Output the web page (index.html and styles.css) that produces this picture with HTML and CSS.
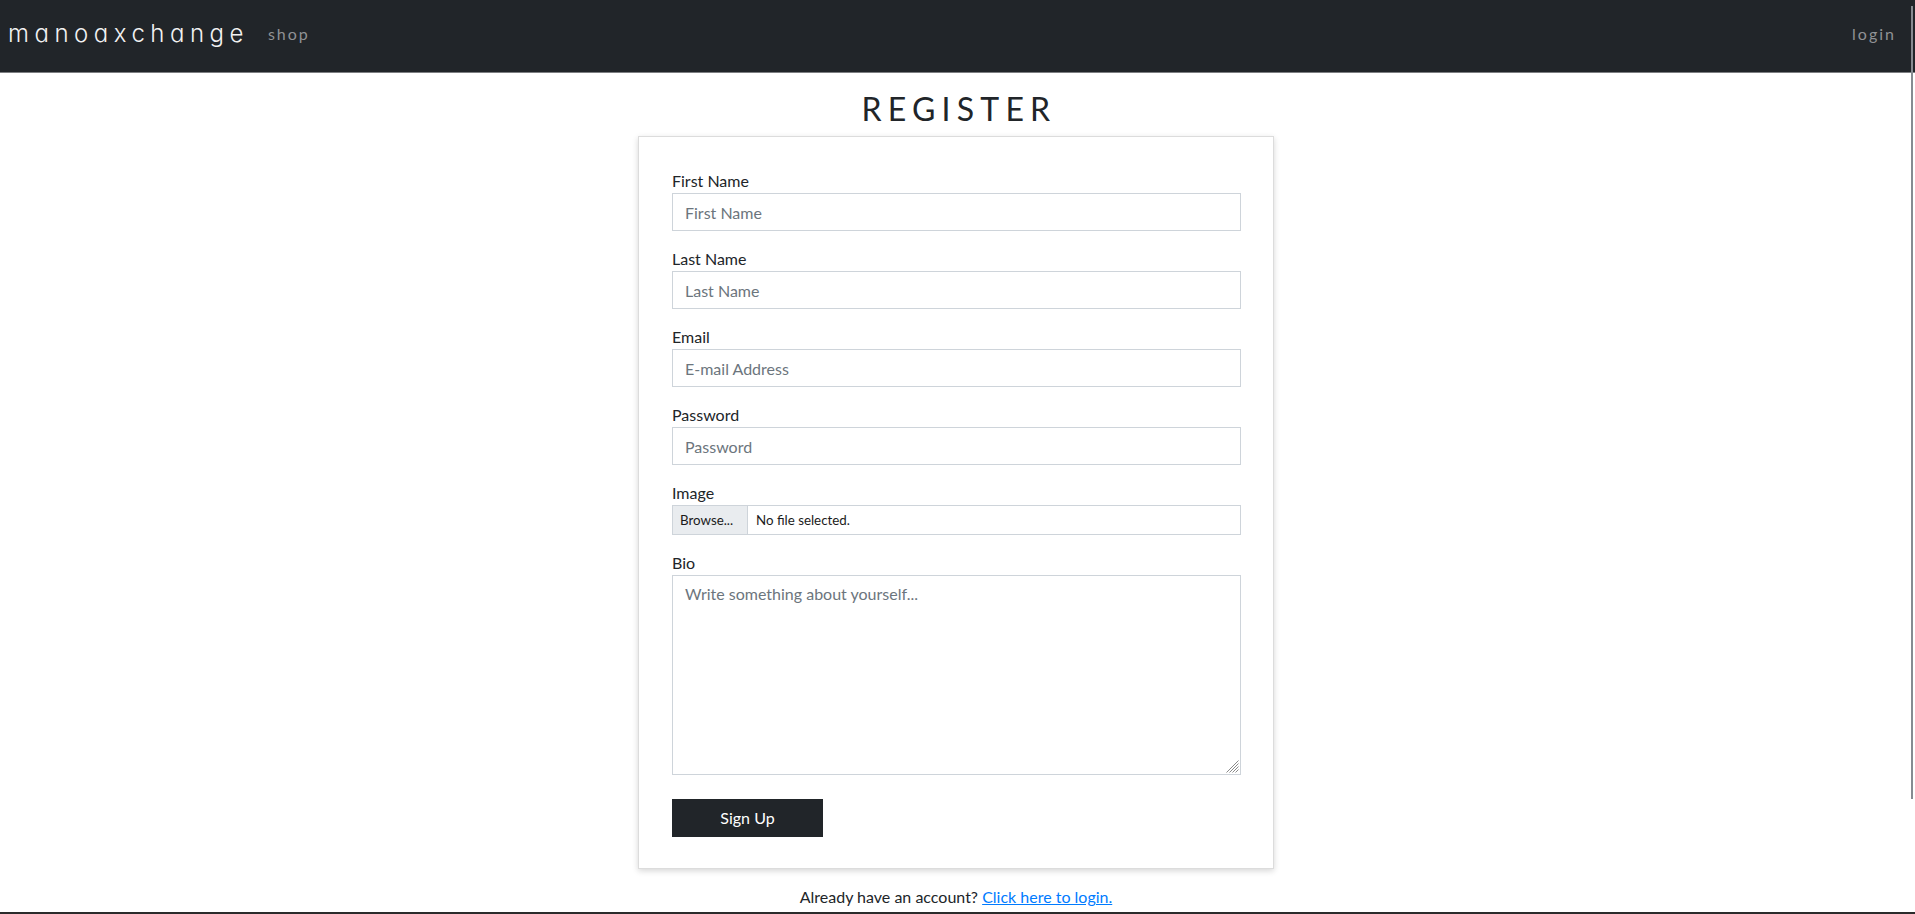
FILE: index.html
```html
<!DOCTYPE html>
<html lang="en">
<head>
<meta charset="utf-8">
<title>Register - manoaxchange</title>
<link rel="stylesheet" href="styles.css">
</head>
<body>
<nav class="navbar">
  <div class="nav-left">
    <a class="brand" href="#">manoaxchange</a>
    <a class="nav-link" href="#">shop</a>
  </div>
  <a class="nav-link login" href="#">login</a>
</nav>

<main class="page">
  <h1 class="title">REGISTER</h1>
  <form class="card">
    <div class="form-group">
      <label class="label" for="first">First Name</label>
      <input class="control" id="first" type="text" placeholder="First Name">
    </div>
    <div class="form-group">
      <label class="label" for="last">Last Name</label>
      <input class="control" id="last" type="text" placeholder="Last Name">
    </div>
    <div class="form-group">
      <label class="label" for="email">Email</label>
      <input class="control" id="email" type="email" placeholder="E-mail Address">
    </div>
    <div class="form-group">
      <label class="label" for="pass">Password</label>
      <input class="control" id="pass" type="password" placeholder="Password">
    </div>
    <div class="form-group">
      <span class="label">Image</span>
      <label class="file">
        <input class="file-input" type="file">
        <span class="file-btn">Browse...</span>
        <span class="file-name">No file selected.</span>
      </label>
    </div>
    <div class="form-group bio-group">
      <label class="label" for="bio">Bio</label>
      <div class="textarea-wrap">
        <textarea class="control textarea" id="bio" placeholder="Write something about yourself..."></textarea>
        <svg class="grip" width="14" height="14" viewBox="0 0 14 14" aria-hidden="true">
          <g stroke="#8a8a8a" stroke-width="1">
            <line x1="13.5" y1="1.5" x2="1.5" y2="13.5"/>
            <line x1="13.5" y1="4.5" x2="4.5" y2="13.5"/>
            <line x1="13.5" y1="7.5" x2="7.5" y2="13.5"/>
            <line x1="13.5" y1="10.5" x2="10.5" y2="13.5"/>
          </g>
        </svg>
      </div>
    </div>
    <button class="submit" type="button">Sign Up</button>
  </form>
  <p class="footer-note">Already have an account? <a href="#" class="link">Click here to login.</a></p>
</main>

<div class="scroll-thumb"></div>
<div class="bottom-edge"></div>
</body>
</html>
```

FILE: styles.css
```css
html {
  scrollbar-width: none;
}
html::-webkit-scrollbar {
  display: none;
}
* {
  box-sizing: border-box;
}
body {
  margin: 0;
  font-family: "Lato", "Liberation Sans", sans-serif;
  font-size: 16px;
  line-height: 24px;
  color: #212529;
  background: #fff;
}

/* Navbar */
.navbar {
  height: 73px;
  background: #212529;
  border-bottom: 1px solid #7d7f82;
  display: flex;
  align-items: center;
  justify-content: space-between;
  padding: 0 19px 5px 8px;
}
.nav-left {
  display: flex;
  align-items: center;
}
.brand {
  font-family: "Inter", "Liberation Sans", sans-serif;
  font-feature-settings: "cv11" 1;
  font-weight: 300;
  font-size: 24px;
  letter-spacing: 5.5px;
  color: #f2f2f2;
  text-decoration: none;
  margin-right: 19px;
}
.nav-link {
  font-size: 16px;
  letter-spacing: 2px;
  color: #909295;
  text-decoration: none;
}

/* Page */
.page {
  display: flex;
  flex-direction: column;
  align-items: center;
  padding-right: 3px;
}
.title {
  margin: 17px 0 8px;
  font-size: 32px;
  line-height: 38px;
  font-weight: 400;
  letter-spacing: 6.2px;
  padding-left: 6px;
  color: #212529;
}
.card {
  width: 636px;
  border: 1px solid #dcdcdc;
  box-shadow: 0 2px 6px rgba(0, 0, 0, 0.16);
  padding: 32px 32px 31px 33px;
  background: #fff;
}
.form-group {
  display: flex;
  flex-direction: column;
  margin-bottom: 16px;
}
.bio-group {
  margin-bottom: 24px;
}
.label {
  display: block;
  line-height: 24px;
}
.control {
  display: block;
  width: 100%;
  height: 38px;
  padding: 6px 12px;
  border: 1px solid #ced4da;
  border-radius: 0;
  font-family: inherit;
  font-size: 16px;
  line-height: 24px;
  color: #495057;
  background: #fff;
  outline: none;
}
.control::placeholder {
  color: #6c757d;
  opacity: 1;
}

/* File input */
.file {
  display: flex;
  align-items: stretch;
  height: 30px;
  border: 1px solid #ced4da;
  font-size: 13.33px;
  line-height: 28px;
  color: #1b1b1b;
  cursor: pointer;
}
.file-input {
  display: none;
}
.file-btn {
  width: 75px;
  padding-left: 7px;
  background: #e9ecef;
  border-right: 1px solid #ced4da;
}
.file-name {
  padding-left: 8px;
}

/* Textarea */
.textarea-wrap {
  position: relative;
}
.textarea {
  height: 200px;
  resize: none;
}
.grip {
  position: absolute;
  right: 2px;
  bottom: 2px;
}

/* Button */
.submit {
  display: block;
  width: 151px;
  height: 38px;
  border: none;
  border-radius: 0;
  background: #212529;
  color: #fff;
  font-family: inherit;
  font-size: 16px;
  line-height: 24px;
  cursor: pointer;
}

.footer-note {
  margin: 16px 0 0;
  line-height: 24px;
}
.link {
  color: #007bff;
  text-decoration: underline;
}

/* Window chrome decorations (overlay) */
.scroll-thumb {
  position: fixed;
  top: 6px;
  right: 2px;
  width: 2px;
  height: 793px;
  background: #868b91;
}
.bottom-edge {
  position: fixed;
  left: 0;
  right: 0;
  bottom: 0;
  height: 2px;
  background: #2b2b2b;
}
```
